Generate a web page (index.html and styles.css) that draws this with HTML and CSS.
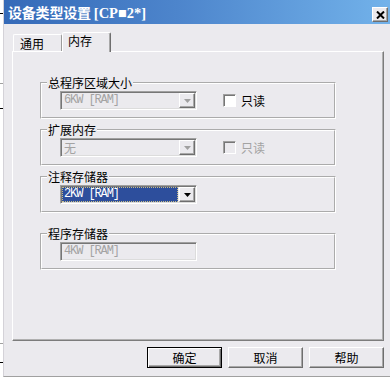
FILE: index.html
```html
<!DOCTYPE html>
<html>

<head>
  <title>设备类型设置</title>
  <link rel="stylesheet" href="styles.css">
</head>

<body>
  <div class="screen">
    <div class="edge"></div>
    <div class="dialog">
      <div class="titlebar">
        <span class="title">设备类型设置<span class="ascii">[CP■2*]</span></span>
        <span class="close">
          <svg width="9" height="8" viewBox="0 0 9 8">
            <path d="M1 0.5 L8 7.5 M8 0.5 L1 7.5" stroke="#000" stroke-width="2" />
          </svg>
        </span>
      </div>

      <div class="content">
        <div class="tabs">
          <div class="tab">通用</div>
          <div class="tab active">内存</div>
        </div>

        <div class="panel">
          <fieldset class="group">
            <legend>总程序区域大小</legend>
            <div class="row">
              <div class="combo disabled">
                <span class="value mono">6KW [RAM]</span>
                <span class="arrow"><svg width="7" height="4" viewBox="0 0 7 4"><path d="M0 0 H7 L3.5 4 Z" /></svg></span>
              </div>
              <label class="check"><span class="box"></span>只读</label>
            </div>
          </fieldset>

          <fieldset class="group">
            <legend>扩展内存</legend>
            <div class="row">
              <div class="combo disabled">
                <span class="value">无</span>
                <span class="arrow"><svg width="7" height="4" viewBox="0 0 7 4"><path d="M0 0 H7 L3.5 4 Z" /></svg></span>
              </div>
              <label class="check disabled"><span class="box"></span>只读</label>
            </div>
          </fieldset>

          <fieldset class="group">
            <legend>注释存储器</legend>
            <div class="row">
              <div class="combo">
                <span class="value mono selected">2KW [RAM]</span>
                <span class="arrow"><svg width="7" height="4" viewBox="0 0 7 4"><path d="M0 0 H7 L3.5 4 Z" /></svg></span>
              </div>
            </div>
          </fieldset>

          <fieldset class="group last">
            <legend>程序存储器</legend>
            <div class="row">
              <div class="combo disabled">
                <span class="value mono">4KW [RAM]</span>
              </div>
            </div>
          </fieldset>
        </div>

        <div class="buttons">
          <button class="btn default">确定</button>
          <button class="btn">取消</button>
          <button class="btn">帮助</button>
        </div>
      </div>
    </div>
  </div>
</body>

</html>
```

FILE: styles.css
```css
* {
  box-sizing: border-box;
}

body,
html {
  margin: 0;
  padding: 0;
}

body {
  background: #fff;
  font-family: "Noto Sans CJK SC", "Liberation Sans", sans-serif;
  font-size: 12px;
  color: #000;
}

.screen {
  display: flex;
  width: 390px;
  height: 385px;
  overflow: hidden;
}

/* bits of the window behind the dialog */
.edge {
  flex: none;
  width: 3px;
  height: 377px;
  background:
    linear-gradient(#000, #000) 0 13px / 3px 1px no-repeat,
    linear-gradient(#a0a0a0, #a0a0a0) 0 83px / 3px 1px no-repeat,
    linear-gradient(#000, #000) 0 108px / 3px 1px no-repeat,
    linear-gradient(#a0a0a0, #a0a0a0) 0 343px / 3px 1px no-repeat,
    linear-gradient(#000, #000) 0 362px / 3px 1px no-repeat,
    #fff;
}

.dialog {
  flex: 1;
  height: 377px;
  background: #ebeaee;
  border-left: 1px solid #d4d2d8;
  border-bottom: 1px solid #a0a0a0;
  display: flex;
  flex-direction: column;
}

.titlebar {
  height: 24px;
  flex: none;
  display: flex;
  align-items: center;
  justify-content: space-between;
  padding: 0 2px 0 4px;
  background: linear-gradient(90deg, #356ab8 0%, #4d85cc 45%, #72b2ea 100%);
}

.title {
  color: #fff;
  font-weight: bold;
  font-size: 14px;
  line-height: 16px;
  letter-spacing: -0.2px;
}

.title .ascii {
  font-family: "Liberation Serif", serif;
  font-size: 14.5px;
  letter-spacing: 0;
  margin-left: 3px;
}

.close {
  align-self: flex-end;
  margin-bottom: 2px;
  width: 16px;
  height: 15px;
  display: flex;
  align-items: center;
  justify-content: center;
  background: #ebeaee;
  border: 1px solid;
  border-color: #fff #6e6e6e #6e6e6e #fff;
  box-shadow: inset -1px -1px 0 #a8a8a8;
}

.content {
  padding: 8px 6px 0 8px;
}

.tabs {
  display: flex;
  align-items: flex-end;
  height: 19px;
  padding-left: 1px;
}

.tab {
  width: 49px;
  height: 17px;
  border: 1px solid;
  border-bottom: none;
  border-color: #fff #9c9c9c transparent #fff;
  border-radius: 2px 2px 0 0;
  padding: 2px 0 0 6px;
  line-height: 13px;
}

.tab.active {
  height: 20px;
  margin-bottom: -1px;
  position: relative;
  z-index: 1;
  background: #ebeaee;
  border-right-color: #6e6e6e;
  box-shadow: inset -1px 0 0 #a8a8a8;
  padding: 1px 0 0 5px;
}

.panel {
  height: 290px;
  border: 1px solid;
  border-color: #fff #7c7c7c #7c7c7c #fff;
  box-shadow: inset -1px -1px 0 #b0b0b0;
  padding: 24px 0 0 27px;
  display: flex;
  flex-direction: column;
  gap: 4px;
}

.group {
  width: 296px;
  margin: 0;
  min-width: 0;
  padding: 1px 0 7px 0;
  border: 2px groove #fff;
}

.group.last {
  margin-top: 10px;
}

.group legend {
  margin-left: 5px;
  padding: 0 1px;
  line-height: 14px;
}

.row {
  display: flex;
  align-items: center;
  padding-left: 18px;
}

.combo {
  width: 137px;
  height: 19px;
  display: flex;
  padding: 1px;
  border: 1px solid;
  border-color: #a0a0a0 #fff #fff #a0a0a0;
  box-shadow: inset 1px 1px 0 #767676, inset -1px -1px 0 #dcdcdc;
}

.value {
  flex: 1;
  padding-left: 2px;
  line-height: 15px;
  white-space: pre;
}

.mono {
  font-family: "Liberation Mono", monospace;
  font-size: 12px;
  letter-spacing: -1.1px;
}

.combo.disabled .value {
  color: #a3a3a3;
}

.value.selected {
  margin-right: 1px;
  padding-left: 1px;
  background: #2d4e9c;
  color: #fff;
  border: 1px dotted #c9bd86;
  line-height: 13px;
}

.arrow {
  flex: none;
  width: 16px;
  height: 15px;
  display: flex;
  align-items: center;
  justify-content: center;
  border: 1px solid;
  border-color: #fff #6e6e6e #6e6e6e #fff;
  box-shadow: inset -1px -1px 0 #a8a8a8;
}

.arrow svg {
  fill: #000;
}

.combo.disabled .arrow svg {
  fill: #a0a0a0;
}

.check {
  display: flex;
  align-items: center;
  gap: 5px;
  margin-left: 26px;
  line-height: 14px;
}

.check .box {
  width: 13px;
  height: 13px;
  border: 1px solid;
  border-color: #a0a0a0 #fff #fff #a0a0a0;
  box-shadow: inset 1px 1px 0 #767676;
  background: #fff;
}

.check.disabled {
  color: #a3a3a3;
}

.check.disabled .box {
  background: #ebeaee;
}

.buttons {
  display: flex;
  justify-content: flex-end;
  gap: 6px;
  margin-top: 6px;
}

.btn {
  width: 75px;
  height: 21px;
  padding: 0;
  font-family: inherit;
  font-size: 12px;
  line-height: 17px;
  color: #000;
  background: #ebeaee;
  border: 1px solid;
  border-color: #fff #6e6e6e #6e6e6e #fff;
  box-shadow: inset -1px -1px 0 #a8a8a8;
}

.btn.default {
  border-color: #000;
  box-shadow: inset 1px 1px 0 #fff, inset -1px -1px 0 #6e6e6e, inset -2px -2px 0 #a8a8a8;
}
```
